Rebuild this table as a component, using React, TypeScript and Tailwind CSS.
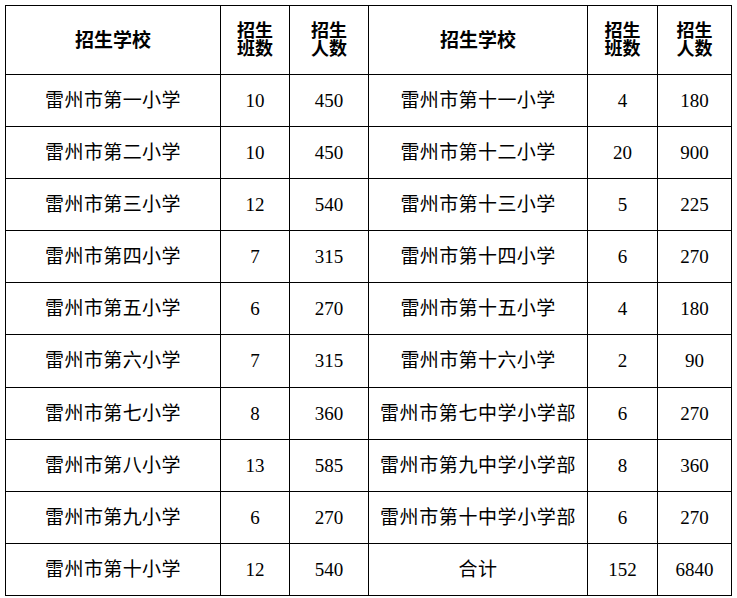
const rows: [string, string, string, string, string, string][] = [
  ["雷州市第一小学", "10", "450", "雷州市第十一小学", "4", "180"],
  ["雷州市第二小学", "10", "450", "雷州市第十二小学", "20", "900"],
  ["雷州市第三小学", "12", "540", "雷州市第十三小学", "5", "225"],
  ["雷州市第四小学", "7", "315", "雷州市第十四小学", "6", "270"],
  ["雷州市第五小学", "6", "270", "雷州市第十五小学", "4", "180"],
  ["雷州市第六小学", "7", "315", "雷州市第十六小学", "2", "90"],
  ["雷州市第七小学", "8", "360", "雷州市第七中学小学部", "6", "270"],
  ["雷州市第八小学", "13", "585", "雷州市第九中学小学部", "8", "360"],
  ["雷州市第九小学", "6", "270", "雷州市第十中学小学部", "6", "270"],
  ["雷州市第十小学", "12", "540", "合计", "152", "6840"],
];

const cell = "border border-black text-center align-middle p-0";
const head = `${cell} font-bold text-[18px] leading-[19px]`;

function NameCell({ text }: { text: string }) {
  const long = text.length > 8;
  return (
    <td className={`${cell} ${long ? "tracking-[0.6px]" : "tracking-[0.4px]"}`}>
      {text}
    </td>
  );
}

function TwoLine({ a, b }: { a: string; b: string }) {
  return (
    <th className={head}>
      <div className="pb-[4px] flex flex-col items-center">
        <span className="leading-[18px]">{a}</span>
        <span className="leading-[18px]">{b}</span>
      </div>
    </th>
  );
}

export default function App() {
  return (
    <div className="bg-white w-[737px] h-[598px] pt-[5px] pl-[5px]">
      <table
        className="table-fixed border-collapse text-black text-[19px]"
        style={{ fontFamily: '"Liberation Serif", "Noto Sans CJK SC", serif' }}
      >
        <colgroup>
          <col className="w-[215px]" />
          <col className="w-[69px]" />
          <col className="w-[79px]" />
          <col className="w-[219px]" />
          <col className="w-[70px]" />
          <col className="w-[74px]" />
        </colgroup>
        <thead style={{ fontFamily: '"Noto Sans CJK SC", sans-serif' }}>
          <tr className="h-[69px]">
            <th className={`${head} text-[19px] pb-[4px]`}>招生学校</th>
            <TwoLine a="招生" b="班数" />
            <TwoLine a="招生" b="人数" />
            <th className={`${head} text-[19px] pb-[4px]`}>招生学校</th>
            <TwoLine a="招生" b="班数" />
            <TwoLine a="招生" b="人数" />
          </tr>
        </thead>
        <tbody className="leading-[20px]">
          {rows.map((r, i) => (
            <tr key={i} className={i === 5 ? "h-[53px]" : "h-[52px]"}>
              <NameCell text={r[0]} />
              <td className={cell}>{r[1]}</td>
              <td className={cell}>{r[2]}</td>
              <NameCell text={r[3]} />
              <td className={cell}>{r[4]}</td>
              <td className={cell}>{r[5]}</td>
            </tr>
          ))}
        </tbody>
      </table>
    </div>
  );
}
